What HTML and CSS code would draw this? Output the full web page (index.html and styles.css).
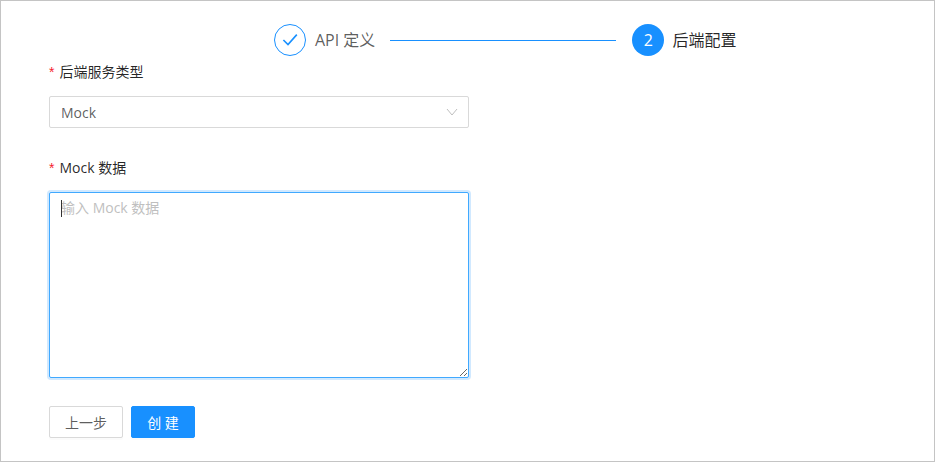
FILE: index.html
```html
<!DOCTYPE html>
<html lang="zh-CN">
<head>
<meta charset="utf-8">
<title>后端配置</title>
<link rel="stylesheet" href="styles.css">
</head>
<body>
<div class="frame">
  <div class="steps">
    <div class="step">
      <span class="step-icon done">
        <svg width="16" height="14" viewBox="0 0 16 14"><path d="M1.4 7 L6 11.6 L14.8 1.6" fill="none" stroke="#1890ff" stroke-width="1.6"/></svg>
      </span>
      <span class="step-title muted">API 定义</span>
    </div>
    <div class="step-line"></div>
    <div class="step">
      <span class="step-icon active">2</span>
      <span class="step-title">后端配置</span>
    </div>
  </div>
  <form class="form">
    <label class="label"><span class="req">*</span>后端服务类型</label>
    <div class="select">
      <span>Mock</span>
      <svg width="12" height="8" viewBox="0 0 12 8"><path d="M1 1 L6 7 L11 1" fill="none" stroke="#bfbfbf" stroke-width="1"/></svg>
    </div>
    <label class="label label-second"><span class="req">*</span>Mock 数据</label>
    <div class="area-wrap">
      <textarea class="area" placeholder="输入 Mock 数据"></textarea>
      <span class="caret"></span>
    </div>
    <div class="actions">
      <button type="button" class="btn">上一步</button>
      <button type="button" class="btn primary">创 建</button>
    </div>
  </form>
</div>
</body>
</html>
```
FILE: styles.css
```css
* { box-sizing: border-box; }
html, body { margin: 0; padding: 0; background: #fff; }
body {
  font-family: "Open Sans", "Noto Sans CJK SC", sans-serif;
  font-size: 14px;
  color: rgba(0, 0, 0, .65);
}
.frame {
  width: 935px;
  height: 462px;
  border: 1px solid #c4c4c4;
  padding: 23px 48px 0;
  overflow: hidden;
}
.steps {
  display: flex;
  align-items: center;
  height: 32px;
  margin-left: 225px;
}
.step { display: flex; align-items: center; gap: 8px; }
.step-icon {
  width: 32px;
  height: 32px;
  border-radius: 50%;
  display: flex;
  align-items: center;
  justify-content: center;
  font-size: 16px;
  flex: none;
}
.done { border: 1px solid #1890ff; }
.active { background: #1890ff; color: #fff; }
.step-title { font-size: 16px; line-height: 24px; color: rgba(0, 0, 0, .85); }
.step-title.muted { color: rgba(0, 0, 0, .65); padding-left: 1px; }
.step-line {
  width: 226px;
  height: 1px;
  background: #1890ff;
  margin: 0 16px 0 15px;
}
.form { width: 420px; }
.label {
  display: block;
  height: 22px;
  line-height: 22px;
  margin-top: 5px;
  margin-bottom: 13px;
  color: rgba(0, 0, 0, .85);
  font-size: 14px;
}
.req {
  color: #f5222d;
  margin-right: 5px;
  font-family: SimSun, "Liberation Sans", sans-serif;
}
.label-second { margin-top: 29px; }
.select {
  height: 32px;
  border: 1px solid #d9d9d9;
  border-radius: 2px;
  padding: 0 10px 0 11px;
  display: flex;
  align-items: center;
  justify-content: space-between;
}
.area-wrap { position: relative; height: 186px; }
.area {
  display: block;
  width: 100%;
  height: 186px;
  border: 1px solid #40a9ff;
  border-radius: 2px;
  box-shadow: 0 0 0 2px rgba(24, 144, 255, .2);
  padding: 4px 11px;
  font: inherit;
  line-height: 22px;
  outline: none;
  resize: vertical;
}
.area::placeholder { color: #bfbfbf; opacity: 1; }
.caret {
  position: absolute;
  left: 12px;
  top: 8px;
  width: 1px;
  height: 17px;
  background: #333;
}
.actions { display: flex; gap: 8px; margin-top: 28px; }
.btn {
  height: 32px;
  width: 74px;
  border: 1px solid #d9d9d9;
  border-radius: 2px;
  background: #fff;
  font: inherit;
  color: rgba(0, 0, 0, .65);
  box-shadow: 0 2px 0 rgba(0, 0, 0, .015);
  padding: 0;
}
.btn.primary {
  width: 64px;
  background: #1890ff;
  border-color: #1890ff;
  color: #fff;
}
```
